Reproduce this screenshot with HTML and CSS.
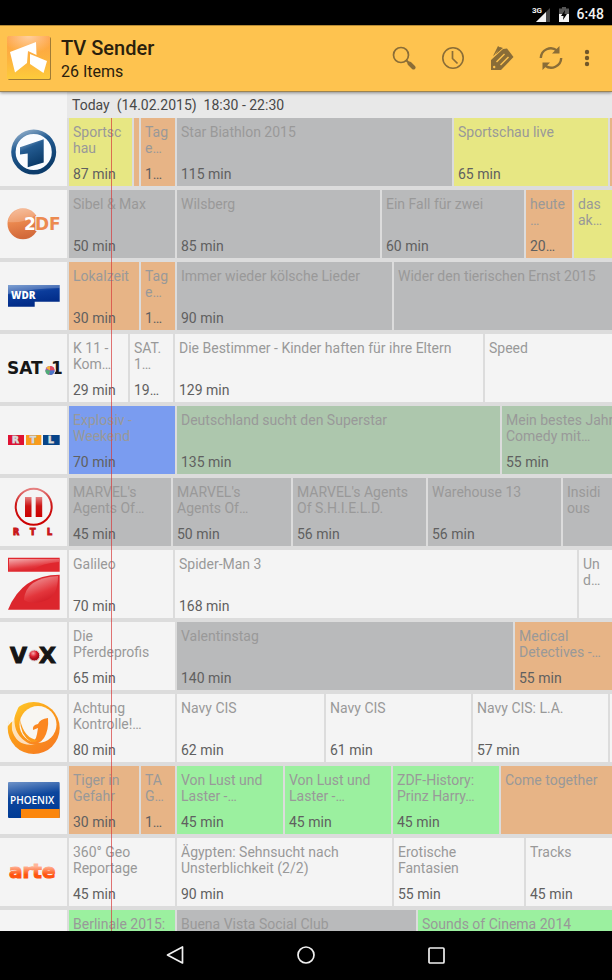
FILE: index.html
```html
<!DOCTYPE html>
<html lang="de">
<head>
<meta charset="utf-8">
<meta name="viewport" content="width=device-width, initial-scale=1">
<title>TV Sender</title>
<link rel="stylesheet" href="styles.css">
</head>
<body>
<div class="status">
  <svg class="signal" viewBox="0 0 20 16" aria-hidden="true"><path d="M18 2v14H4z" fill="#444"/><path d="M14 6v10H4z" fill="#f2f2f2"/><text x="0" y="7" class="net">3G</text></svg>
  <svg class="battery" viewBox="0 0 10 16" aria-hidden="true"><path d="M3 1h4v1.500h3V8H0V2.500h3z" fill="#555"/><path d="M0 8h10v8H0z" fill="#f2f2f2"/><path d="M6 4 2 10h2.500L4 14l4-6H5.500z" fill="#000"/></svg>
  <span>6:48</span>
</div>
<header class="bar">
  <svg class="app" viewBox="0 0 44 44" aria-hidden="true">
    <defs><linearGradient id="appg" x2="0" y2="1"><stop stop-color="#ffa044"/><stop offset=".5" stop-color="#fdb13f"/><stop offset="1" stop-color="#fdcb3b"/></linearGradient>
    <radialGradient id="appl" cx=".5" cy="0" r=".6"><stop stop-color="#ffd0a0"/><stop offset="1" stop-color="#ffd0a0" stop-opacity="0"/></radialGradient></defs>
    <rect x="1" y="1" width="43" height="43" rx="1.500" fill="#a07b35"/><rect width="43" height="43" rx="1.500" fill="url(#appg)"/><rect width="43" height="30" fill="url(#appl)"/>
    <path d="M3 16 29 6l.500 13L21 15l-1 12-12 9.500z" fill="#fff"/><path d="m23 18 17 7-3.500 12L23 28z" fill="#fff"/>
  </svg>
  <div class="titles"><h1>TV Sender</h1><p>26 Items</p></div>
  <div class="actions">
    <button aria-label="Suchen"><svg viewBox="0 0 24 24"><circle cx="9" cy="9" r="7.500" fill="none" stroke="currentColor" stroke-width="1.700"/><path d="m14 14 3 3" stroke="currentColor" stroke-width="2"/><path d="m17.500 17.500 4 4" stroke="currentColor" stroke-width="4" stroke-linecap="round"/></svg></button>
    <button aria-label="Zeit"><svg viewBox="0 0 24 24"><circle cx="12" cy="12" r="10.200" fill="none" stroke="currentColor" stroke-width="1.600"/><path d="M11.500 5v7.500l5 5" fill="none" stroke="currentColor" stroke-width="1.700"/></svg></button>
    <button aria-label="Tags"><svg viewBox="0 0 24 24"><path fill="currentColor" fill-rule="evenodd" d="M1 14 13 3l4-.500L23.500 11 11 24H1zM3 21a1.200 1.200 0 1 0 2.400 0 1.200 1.200 0 0 0-2.400 0zM6 15.500l8-8 1 1-8 8zM10 18.500l8-8 1 1-8 8z"/><path fill="currentColor" d="M3 10 8 0l2 1.500L4.500 9zM5.500 8.500 10 1l3 1z"/></svg></button>
    <button aria-label="Aktualisieren"><svg viewBox="0 0 24 24"><g fill="none" stroke="currentColor" stroke-width="2.400"><path d="M1.800 12A10 10 0 0 1 18 4.500"/><path d="M22.200 12A10 10 0 0 1 6 19.500"/></g><path d="M20.500 0v7.500H13zM3.500 24v-7.500H11z" fill="currentColor"/></svg></button>
    <button class="more" aria-label="Mehr"><svg viewBox="0 0 24 24"><g fill="currentColor"><circle cx="12" cy="6" r="2.200"/><circle cx="12" cy="12" r="2.200"/><circle cx="12" cy="18" r="2.200"/></g></svg></button>
  </div>
</header>
<main class="guide">
  <div class="time"><span class="corner"></span><h2>Today&nbsp; (14.02.2015)&nbsp; 18:30 - 22:30</h2></div>
  <div class="rows">
  <div class="now"></div>

  <section class="row"><svg class="logo" viewBox="0 0 67 68" role="img" aria-label="Das Erste">
    <defs><linearGradient id="ard" x2=".4" y2="1"><stop stop-color="#9fb9d2"/><stop offset=".4" stop-color="#245c92"/><stop offset="1" stop-color="#0c3c6b"/></linearGradient></defs>
    <circle cx="33.700" cy="34" r="20.300" fill="#fafcff" stroke="url(#ard)" stroke-width="4.400"/><path d="m20 29.300 23.700-8v23.200l-16 4.800V35.500l-7.700 1z" fill="url(#ard)"/></svg>
    <div class="cell sport" style="width:63px"><p>Sportsc<br>hau</p><b>87 min</b></div><div class="cell news" style="width:5px"></div><div class="cell news" style="width:34px"><p>Tag<br>e…</p><b>1…</b></div><div class="cell gray" style="width:275px"><p>Star Biathlon 2015</p><b>115 min</b></div><div class="cell sport" style="width:154px"><p>Sportschau live</p><b>65 min</b></div><div class="cell news last"></div></section>

  <section class="row"><svg class="logo" viewBox="0 0 67 68" role="img" aria-label="ZDF">
    <defs><linearGradient id="zdf" x2=".2" y2="1"><stop stop-color="#f5b48e"/><stop offset=".45" stop-color="#ec8a50"/><stop offset="1" stop-color="#d2693a"/></linearGradient></defs>
    <circle cx="23" cy="33.700" r="15.500" fill="url(#zdf)"/><path d="M8 32a15.500 15.500 0 0 1 28-7Q22 34 8 32z" fill="#fff" opacity=".2"/><text class="zdf" x="24" y="40" fill="#fff">2</text><text class="zdf" x="35" y="40" fill="#ec8a50" stroke="#f4f4f4" stroke-width="2" paint-order="stroke">DF</text></svg>
    <div class="cell gray" style="width:106px"><p>Sibel &amp; Max</p><b>50 min</b></div><div class="cell gray" style="width:203px"><p>Wilsberg</p><b>85 min</b></div><div class="cell gray" style="width:142px"><p>Ein Fall für zwei</p><b>60 min</b></div><div class="cell news" style="width:46px"><p>heute<br>…</p><b>20…</b></div><div class="cell sport last"><p>das<br>ak…</p></div></section>

  <section class="row"><svg class="logo" viewBox="0 0 67 68" role="img" aria-label="WDR">
    <defs><linearGradient id="wdr" x2=".3" y2="1"><stop stop-color="#5f8ac8"/><stop offset=".45" stop-color="#0b3c9b"/><stop offset="1" stop-color="#002a86"/></linearGradient></defs>
    <path d="M8 23h51.700v16.700h-25v5H8z" fill="url(#wdr)"/><path d="M8 23h51.700v3Q35 26 8 32z" fill="#fff" opacity=".2"/><text class="wdr" x="11" y="37">WDR</text></svg>
    <div class="cell news" style="width:70px"><p>Lokalzeit</p><b>30 min</b></div><div class="cell news" style="width:34px"><p>Tag<br>e…</p><b>1…</b></div><div class="cell gray" style="width:215px"><p>Immer wieder kölsche Lieder</p><b>90 min</b></div><div class="cell gray last"><p>Wider den tierischen Ernst 2015</p></div></section>

  <section class="row"><svg class="logo" viewBox="0 0 67 68" role="img" aria-label="SAT.1">
    <text class="sat" x="7" y="40">SAT</text><text class="sat" x="51" y="40">1</text><circle cx="50" cy="36.500" r="5.500" fill="#f4f4f4"/><circle cx="50" cy="36.500" r="4.600" fill="#a55bb0"/><path d="M50 36.500 46 34a4.600 4.600 0 0 1 4-2z" fill="#f4b13c"/><path d="M50 36.500V32a4.600 4.600 0 0 1 4.500 4z" fill="#e24b5c"/><path d="m50 36.500 4.500 0a4.600 4.600 0 0 1-4.500 4.500z" fill="#4b76c9"/><path d="m50 36.500-1 4.500a4.600 4.600 0 0 1-3.500-5z" fill="#4dae75"/></svg>
    <div class="cell" style="width:59px"><p>K 11 -<br>Kom…</p><b>29 min</b></div><div class="cell" style="width:43px"><p>SAT.<br>1…</p><b>19…</b></div><div class="cell" style="width:308px"><p>Die Bestimmer - Kinder haften für ihre Eltern</p><b>129 min</b></div><div class="cell last"><p>Speed</p></div></section>

  <section class="row"><svg class="logo" viewBox="0 0 67 68" role="img" aria-label="RTL">
    <path d="M8 29h16v10H8z" fill="#df1233"/><path d="M26 29h15.300v10H26z" fill="#f99b1c"/><path d="M43 29h16.700v10H43z" fill="#064489"/><g class="rtl"><text x="12" y="37">R</text><text x="30" y="37">T</text><text x="48" y="37">L</text></g></svg>
    <div class="cell blue" style="width:106px"><p>Explosiv -<br>Weekend</p><b>70 min</b></div><div class="cell show" style="width:323px"><p>Deutschland sucht den Superstar</p><b>135 min</b></div><div class="cell show last"><p>Mein bestes Jahr<br>Comedy mit…</p><b>55 min</b></div></section>

  <section class="row"><svg class="logo" viewBox="0 0 67 68" role="img" aria-label="RTL II">
    <defs><linearGradient id="r2" x2="0" y2="1"><stop stop-color="#e58080"/><stop offset=".45" stop-color="#cc1414"/><stop offset="1" stop-color="#c00"/></linearGradient></defs>
    <circle cx="33.700" cy="28.700" r="18" fill="none" stroke="url(#r2)" stroke-width="2"/><path d="M25 19h6.500v20H25zM35.700 19h6.500v20h-6.500z" fill="url(#r2)"/><g class="rtl2"><text x="13" y="57">R</text><text x="30" y="57">T</text><text x="47" y="57">L</text></g></svg>
    <div class="cell gray" style="width:102px"><p>MARVEL's<br>Agents Of…</p><b>45 min</b></div><div class="cell gray" style="width:118px"><p>MARVEL's<br>Agents Of…</p><b>50 min</b></div><div class="cell gray" style="width:133px"><p>MARVEL's Agents<br>Of S.H.I.E.L.D.</p><b>56 min</b></div><div class="cell gray" style="width:133px"><p>Warehouse 13</p><b>56 min</b></div><div class="cell gray last"><p>Insidi<br>ous</p></div></section>

  <section class="row"><svg class="logo" viewBox="0 0 67 68" role="img" aria-label="ProSieben">
    <defs><linearGradient id="p7" x2=".5" y2="1"><stop stop-color="#f3aeb0"/><stop offset=".7" stop-color="#e3363c"/><stop offset="1" stop-color="#d41f28"/></linearGradient></defs>
    <path d="M8 7.700h51.700v14H8z" fill="#e0272e"/><path d="M9 9h50v3Q42 13 33 20L9 21z" fill="url(#p7)"/><path d="M8 59.700Q22 24.700 59.700 24.700v35z" fill="#dc262d"/><path d="M24 50Q25 28 58 26q0 19-11 24-14 6-23 0z" fill="url(#p7)"/></svg>
    <div class="cell" style="width:104px"><p>Galileo</p><b>70 min</b></div><div class="cell" style="width:402px"><p>Spider-Man 3</p><b>168 min</b></div><div class="cell last"><p>Un<br>d…</p></div></section>

  <section class="row"><svg class="logo" viewBox="0 0 67 68" role="img" aria-label="VOX">
    <defs><radialGradient id="vox" cx=".4" cy=".3"><stop stop-color="#f7a9ae"/><stop offset=".6" stop-color="#dc2030"/><stop offset="1" stop-color="#a80d1c"/></radialGradient></defs>
    <text class="vox" x="10" y="41">V</text><text class="vox" x="39" y="41">X</text><circle cx="34.300" cy="33.500" r="5.500" fill="url(#vox)" stroke="#ddd"/></svg>
    <div class="cell" style="width:106px"><p>Die<br>Pferdeprofis</p><b>65 min</b></div><div class="cell gray" style="width:336px"><p>Valentinstag</p><b>140 min</b></div><div class="cell news last"><p>Medical<br>Detectives -…</p><b>55 min</b></div></section>

  <section class="row"><svg class="logo" viewBox="0 0 67 68" role="img" aria-label="kabel eins">
    <defs><linearGradient id="k1" x2=".7" y2="1"><stop stop-color="#ffd22e"/><stop offset=".5" stop-color="#fb9b18"/><stop offset="1" stop-color="#f77e22"/></linearGradient></defs>
    <circle cx="33.700" cy="34" r="26" fill="url(#k1)"/><path d="M12 14 21 7 16 19q-2 5-3 8-2 1-5 5 0-10 4-18z" fill="#f4f4f4"/><circle cx="38" cy="30.500" r="18.500" fill="#f8f6f2"/><path d="M15 19Q12 38 25 47q5 4 12 3Q17 54 12 36q-1-10 3-17z" fill="#fff" opacity=".7"/><path d="M33 36q-1-5 5-6 2-5 10-6 1 12-4 20-5 7-12 6l-4-1q8-1 9-9l1-6z" fill="#fb8720"/><path d="M20 25Q20 41 31 48q4 1 7-2Q24 45 20 25z" fill="#fb9a1c"/></svg>
    <div class="cell" style="width:106px"><p>Achtung<br>Kontrolle!…</p><b>80 min</b></div><div class="cell" style="width:147px"><p>Navy CIS</p><b>62 min</b></div><div class="cell" style="width:145px"><p>Navy CIS</p><b>61 min</b></div><div class="cell" style="width:135px"><p>Navy CIS: L.A.</p><b>57 min</b></div><div class="cell last"></div></section>

  <section class="row"><svg class="logo" viewBox="0 0 67 68" role="img" aria-label="PHOENIX">
    <defs><linearGradient id="ph" x2=".2" y2="1"><stop stop-color="#6f93c8"/><stop offset=".45" stop-color="#0d469d"/><stop offset="1" stop-color="#003b95"/></linearGradient></defs>
    <rect x="8" y="16" width="51.700" height="36" rx="1" fill="url(#ph)"/><path d="M21 43h38.700v9H21z" fill="#fb860c"/><text class="ph" x="10" y="38">PHOENIX</text></svg>
    <div class="cell news" style="width:70px"><p>Tiger in<br>Gefahr</p><b>30 min</b></div><div class="cell news" style="width:34px"><p>TA<br>G…</p><b>1…</b></div><div class="cell green" style="width:106px"><p>Von Lust und<br>Laster -…</p><b>45 min</b></div><div class="cell green" style="width:106px"><p>Von Lust und<br>Laster -…</p><b>45 min</b></div><div class="cell green" style="width:106px"><p>ZDF-History:<br>Prinz Harry…</p><b>45 min</b></div><div class="cell news last"><p>Come together</p></div></section>

  <section class="row"><svg class="logo" viewBox="0 0 67 68" role="img" aria-label="arte">
    <defs><linearGradient id="ar" x2="0" y2="1"><stop offset=".3" stop-color="#ffb59a"/><stop offset=".65" stop-color="#ff5410"/></linearGradient></defs><text class="arte" x="9" y="40" fill="url(#ar)" stroke="url(#ar)">arte</text></svg>
    <div class="cell" style="width:106px"><p>360° Geo<br>Reportage</p><b>45 min</b></div><div class="cell" style="width:215px"><p>Ägypten: Sehnsucht nach<br>Unsterblichkeit (2/2)</p><b>90 min</b></div><div class="cell" style="width:130px"><p>Erotische<br>Fantasien</p><b>55 min</b></div><div class="cell last"><p>Tracks</p><b>45 min</b></div></section>

  <section class="row"><div class="logo"></div>
    <div class="cell green" style="width:106px"><p>Berlinale 2015:</p></div><div class="cell gray" style="width:239px"><p>Buena Vista Social Club</p></div><div class="cell green last"><p>Sounds of Cinema 2014</p></div></section>
  </div>
</main>
<nav class="nav">
  <button aria-label="Zurück"><svg viewBox="0 0 20 20"><path d="M17.500 2v16L2.500 10z"/></svg></button>
  <button aria-label="Start"><svg viewBox="0 0 20 20"><circle cx="10" cy="10" r="8"/></svg></button>
  <button aria-label="Übersicht"><svg viewBox="0 0 20 20"><rect x="2" y="3" width="15" height="15" rx="1"/></svg></button>
</nav>
</body>
</html>
```

FILE: styles.css
```css
* { box-sizing: border-box; margin: 0; padding: 0; }
body {
  height: 100vh;
  display: flex;
  flex-direction: column;
  overflow: hidden;
  background: #000;
  font-family: Roboto, "Liberation Sans", sans-serif;
}
button { border: 0; background: none; color: inherit; display: grid; place-items: center; }

.status {
  flex: none;
  height: 25px;
  padding: 2px 8px 0 0;
  display: flex;
  justify-content: flex-end;
  align-items: center;
  color: #f2f2f2;
  font-size: 14px;
  font-weight: 500;
}
.signal { width: 20px; height: 16px; margin-right: 7px; }
.battery { width: 10px; height: 16px; margin-right: 7px; }
.net { font-size: 8px; font-weight: 700; fill: #f2f2f2; stroke: #000; stroke-width: 1px; paint-order: stroke; }

.bar {
  flex: none;
  height: 67px;
  padding: 0 13px 2px 7px;
  display: flex;
  align-items: center;
  background: #fec34f;
  border-top: 1px solid #b58a35;
  border-bottom: 1px solid #9d8350;
  box-shadow: 0 1px 3px rgba(0, 0, 0, .4);
  z-index: 1;
}
.app { width: 44px; height: 44px; }
.titles { flex: 1; padding: 4px 0 0 10px; color: #2a200d; }
.titles h1 { font-size: 20px; line-height: 24px; font-weight: 500; }
.titles p { font-size: 16px; line-height: 24px; }
.actions { display: flex; color: #8a6d37; }
.actions button { width: 49px; height: 48px; }
.actions svg { width: 24px; height: 24px; }
.actions .more { width: 24px; color: #71572a; }

.guide { flex: 1; min-height: 0; display: flex; flex-direction: column; overflow: hidden; background: #dcdcdc; }
.time { flex: none; height: 26px; display: flex; background: #e8e8e8; }
.corner { width: 67px; background: #f4f4f4; }
.time h2 { padding-left: 5px; font-size: 14px; line-height: 26px; font-weight: 400; color: #484848; }
.rows { position: relative; flex: 1; min-height: 0; overflow: hidden; }
.now { position: absolute; left: 111px; top: 0; bottom: 0; width: 1px; background: rgba(214, 58, 58, .7); }
.row { display: flex; gap: 2px; height: 68px; margin-bottom: 4px; }
.logo { flex: none; width: 67px; height: 68px; background: #f4f4f4; }
.cell {
  flex: none;
  display: flex;
  flex-direction: column;
  justify-content: space-between;
  padding: 6px 0 4px 4px;
  overflow: hidden;
  background: #f4f4f4;
  color: #999;
  font-size: 14px;
  line-height: 16px;
  white-space: nowrap;
}
.cell b { font-weight: 400; color: #606060; margin-top: auto; }
.last { flex: 1; min-width: 0; }
.sport { background: #e7e783; }
.news { background: #e7b486; }
.gray { background: #b9babb; }
.blue { background: #7a9cf0; }
.show { background: #adc7ad; }
.green { background: #9bf09f; }

.zdf { font: 700 17px "DejaVu Sans", sans-serif; }
.wdr { font: 800 10px "Open Sans", sans-serif; fill: #fff; }
.sat { font: 700 17px "DejaVu Sans", sans-serif; fill: #161616; }
.rtl text { font: 700 9px "DejaVu Sans", sans-serif; fill: #ddd; stroke: #bbb; stroke-width: 1px; paint-order: stroke; }
.rtl2 text { font: 700 8px "DejaVu Sans", sans-serif; fill: #c81818; stroke: #c81818; stroke-width: 1px; }
.vox { font: 700 22px "DejaVu Sans", sans-serif; fill: #151515; stroke: #151515; stroke-width: 1px; }
.ph { font: 600 10px "Open Sans", sans-serif; fill: #fff; }
.arte { font: 700 20px "DejaVu Sans", sans-serif; stroke-width: 1px; }

.nav { flex: none; height: 49px; padding-bottom: 2px; display: flex; align-items: center; justify-content: center; gap: 83px; background: #000; }
.nav button { width: 48px; height: 47px; }
.nav svg { width: 20px; height: 20px; fill: none; stroke: #f0f0f0; stroke-width: 1.700; stroke-linejoin: round; }
```
